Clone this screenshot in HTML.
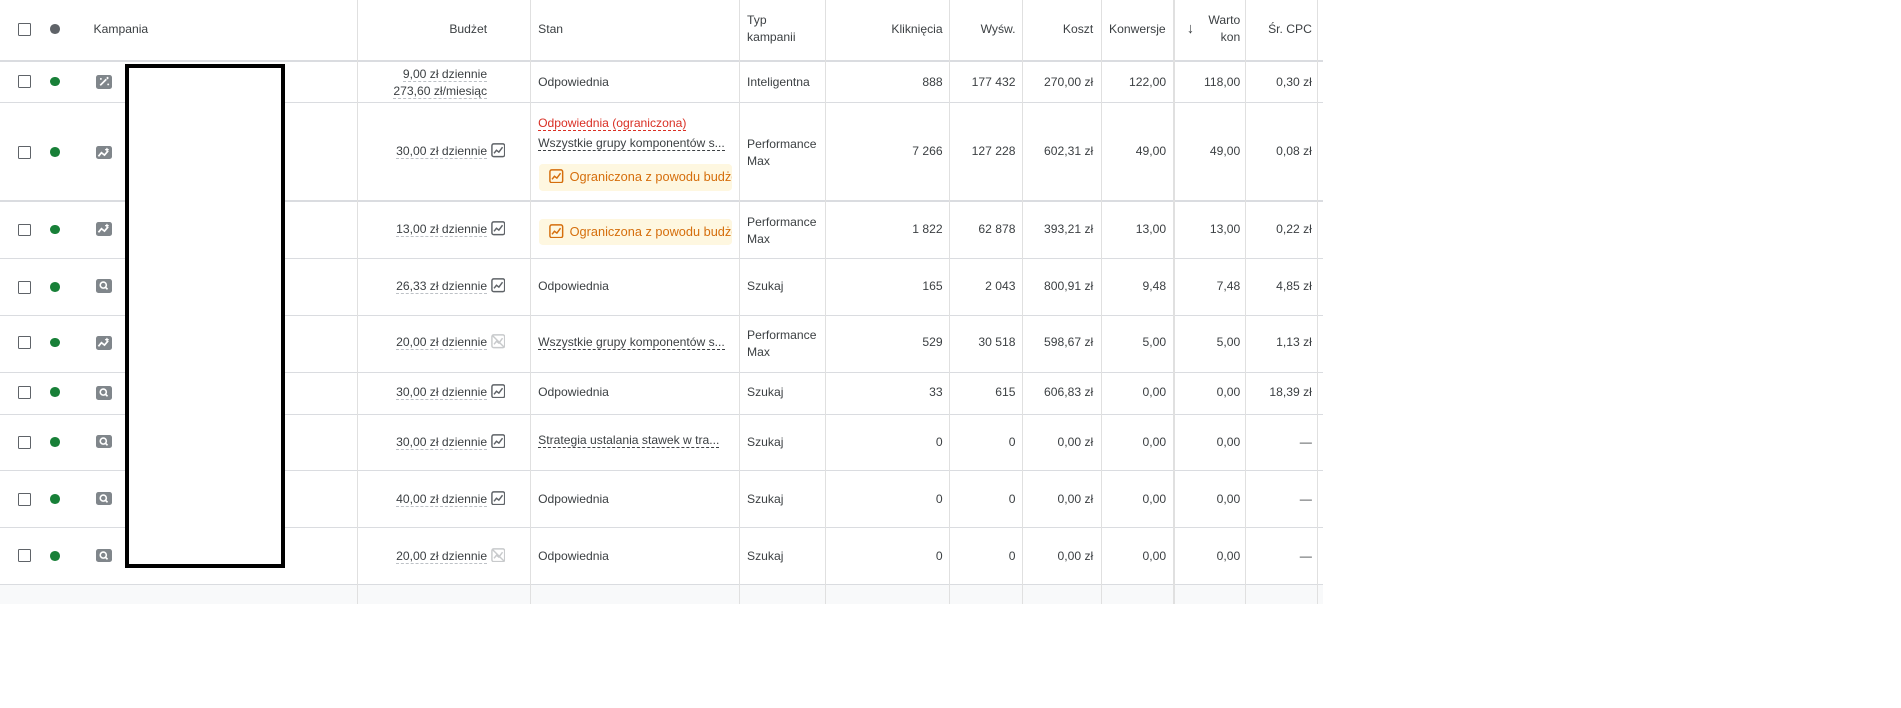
<!DOCTYPE html>
<html><head><meta charset="utf-8">
<style>
html,body{margin:0;padding:0;background:#fff;width:1901px;height:708px;overflow:hidden}
#w{zoom:1.2147;position:relative;width:1565px;height:583px;font-family:"Liberation Sans",Arial,sans-serif;font-size:10px;color:#3c4043}
.hl{position:absolute;left:0;width:1089px;height:1px;background:#dadce0}
.vl{position:absolute;width:1px;background:#e0e0e0;top:0;height:497px}
.t{position:absolute;white-space:nowrap;line-height:14px}
.r{text-align:right}
.cb{position:absolute;left:15px;width:9px;height:9px;border:1px solid #5f6368;border-radius:1px}
.dot{position:absolute;left:41px;width:8px;height:8px;border-radius:50%;background:#188038}
.ic{position:absolute;left:79px;width:13px;height:11px;background:#80868b;border-radius:2px;color:#fff;font-size:8px;line-height:11px;text-align:center;overflow:hidden}
.ic svg{display:block}
.du{border-bottom:1px dashed #bdc1c6}
.dd{border-bottom:1px dashed #3c4043}
svg.ci{width:12px;height:12px;vertical-align:-2px;margin-left:3px}
.chip{position:absolute;left:444px;width:159px;height:22px;background:#fef7e0;border-radius:3px;color:#d56e0c;font-size:10.5px;line-height:22px;overflow:hidden;white-space:nowrap}
.chip svg{vertical-align:-2px;margin:0 5px 0 8px}
</style></head><body><div id="w">
<svg width="0" height="0" style="position:absolute">
<defs>
<symbol id="ch" viewBox="0 0 12 12"><rect x="0.75" y="0.75" width="10.5" height="10.5" rx="1.5" fill="none" stroke="currentColor" stroke-width="1.2"/><polyline points="2.5,8.5 4.5,6 6.5,7.5 9.5,3.5" fill="none" stroke="currentColor" stroke-width="1.2"/></symbol>
<symbol id="chx" viewBox="0 0 12 12"><rect x="0.75" y="0.75" width="10.5" height="10.5" rx="1.5" fill="none" stroke="currentColor" stroke-width="1.2"/><polyline points="2.5,8.5 4.5,6 6.5,7.5 9.5,3.5" fill="none" stroke="currentColor" stroke-width="1.2"/><line x1="1" y1="1" x2="11" y2="11" stroke="currentColor" stroke-width="1.2"/></symbol>
<symbol id="pm" viewBox="0 0 13 11"><polyline points="2,8.5 4.5,5.5 7,7.5 10,4" fill="none" stroke="#fff" stroke-width="1.4"/><path d="M9 1.5v3M7.5 3h3" stroke="#fff" stroke-width="1"/></symbol>
<symbol id="sr" viewBox="0 0 13 11"><circle cx="6" cy="5" r="2.5" fill="none" stroke="#fff" stroke-width="1.3"/><line x1="7.8" y1="6.8" x2="9.5" y2="8.5" stroke="#fff" stroke-width="1.4"/></symbol>
<symbol id="wd" viewBox="0 0 13 11"><line x1="3.5" y1="8.5" x2="8.5" y2="3.5" stroke="#fff" stroke-width="1.4"/><path d="M9.5 1.5v2M8.5 2.5h2M4 2.5v1.5M3.3 3.2h1.5M10 7v1.5M9.3 7.7h1.5" stroke="#fff" stroke-width=".8"/></symbol>
</defs></svg>
<div style="position:absolute;left:0;top:481px;width:1089px;height:16px;background:#f8f9fa"></div>
<div class="hl" style="top:49px;height:2px"></div>
<div class="hl" style="top:84px"></div>
<div class="hl" style="top:165px"></div>
<div class="hl" style="top:212px"></div>
<div class="hl" style="top:259px"></div>
<div class="hl" style="top:306px"></div>
<div class="hl" style="top:341px"></div>
<div class="hl" style="top:387px"></div>
<div class="hl" style="top:434px"></div>
<div class="hl" style="top:481px"></div>
<div class="vl" style="left:294px"></div><div class="vl" style="left:436px"></div><div class="vl" style="left:608px"></div><div class="vl" style="left:679px"></div><div class="vl" style="left:781px"></div><div class="vl" style="left:841px"></div><div class="vl" style="left:906px"></div><div class="vl" style="left:966px"></div><div class="vl" style="left:1025px"></div><div class="vl" style="left:1084px"></div>
<!-- header -->
<div class="cb" style="top:19px"></div>
<div class="dot" style="top:20px;background:#5f6368"></div>
<div class="t" style="left:77px;top:17px">Kampania</div>
<div class="t r" style="right:1164px;top:17px">Budżet</div>
<div class="t" style="left:443px;top:17px">Stan</div>
<div class="t" style="left:615px;top:10px">Typ<br>kampanii</div>
<div class="t r" style="right:789px;top:17px">Kliknięcia</div>
<div class="t r" style="right:729px;top:17px">Wyśw.</div>
<div class="t r" style="right:665px;top:17px">Koszt</div>
<div class="t" style="left:913px;top:17px;width:47px;overflow:hidden">Konwersje</div>
<div class="t" style="left:977px;top:17px;font-size:12px">↓</div>
<div class="t r" style="right:544px;top:10px;width:30px;overflow:hidden">Warto<br>kon</div>
<div class="t r" style="right:485px;top:17px">Śr. CPC</div>
<!-- row 1 -->
<div class="cb" style="top:62px"></div><div class="dot" style="top:63px"></div><div class="ic" style="top:62px"><svg width="13" height="11"><use href="#wd"/></svg></div>
<div class="t r" style="right:1164px;top:54px"><span class="du">9,00 zł dziennie</span><br><span class="du">273,60 zł/miesiąc</span></div>
<div class="t" style="left:443px;top:61px">Odpowiednia</div>
<div class="t" style="left:615px;top:61px">Inteligentna</div>
<div class="t r" style="right:789px;top:61px">888</div><div class="t r" style="right:729px;top:61px">177 432</div><div class="t r" style="right:665px;top:61px">270,00 zł</div><div class="t r" style="right:605px;top:61px">122,00</div><div class="t r" style="right:544px;top:61px">118,00</div><div class="t r" style="right:485px;top:61px">0,30 zł</div>
<!-- row 2 -->
<div class="cb" style="top:120px"></div><div class="dot" style="top:121px"></div><div class="ic" style="top:120px"><svg width="13" height="11"><use href="#pm"/></svg></div>
<div class="t r" style="right:1149px;top:118px"><span class="du">30,00 zł dziennie</span><svg class="ci" style="color:#5f6368"><use href="#ch"/></svg></div>
<div class="t" style="left:443px;top:95px;color:#d93025"><span style="border-bottom:1px dashed #d93025">Odpowiednia (ograniczona)</span></div>
<div class="t" style="left:443px;top:111px"><span class="dd">Wszystkie grupy komponentów s...</span></div>
<div class="chip" style="top:135px"><svg width="12" height="12" style="color:#d56e0c"><use href="#ch"/></svg>Ograniczona z powodu budżetu</div>
<div class="t" style="left:615px;top:112px">Performance<br>Max</div>
<div class="t r" style="right:789px;top:118px">7 266</div><div class="t r" style="right:729px;top:118px">127 228</div><div class="t r" style="right:665px;top:118px">602,31 zł</div><div class="t r" style="right:605px;top:118px">49,00</div><div class="t r" style="right:544px;top:118px">49,00</div><div class="t r" style="right:485px;top:118px">0,08 zł</div>
<!-- row 3 -->
<div class="cb" style="top:184px"></div><div class="dot" style="top:185px"></div><div class="ic" style="top:183px"><svg width="13" height="11"><use href="#pm"/></svg></div>
<div class="t r" style="right:1149px;top:182px"><span class="du">13,00 zł dziennie</span><svg class="ci" style="color:#5f6368"><use href="#ch"/></svg></div>
<div class="chip" style="top:180px"><svg width="12" height="12" style="color:#d56e0c"><use href="#ch"/></svg>Ograniczona z powodu budżetu</div>
<div class="t" style="left:615px;top:176px">Performance<br>Max</div>
<div class="t r" style="right:789px;top:182px">1 822</div><div class="t r" style="right:729px;top:182px">62 878</div><div class="t r" style="right:665px;top:182px">393,21 zł</div><div class="t r" style="right:605px;top:182px">13,00</div><div class="t r" style="right:544px;top:182px">13,00</div><div class="t r" style="right:485px;top:182px">0,22 zł</div>
<!-- row 4 -->
<div class="cb" style="top:231px"></div><div class="dot" style="top:232px"></div><div class="ic" style="top:230px"><svg width="13" height="11"><use href="#sr"/></svg></div>
<div class="t r" style="right:1149px;top:229px"><span class="du">26,33 zł dziennie</span><svg class="ci" style="color:#5f6368"><use href="#ch"/></svg></div>
<div class="t" style="left:443px;top:229px">Odpowiednia</div>
<div class="t" style="left:615px;top:229px">Szukaj</div>
<div class="t r" style="right:789px;top:229px">165</div><div class="t r" style="right:729px;top:229px">2 043</div><div class="t r" style="right:665px;top:229px">800,91 zł</div><div class="t r" style="right:605px;top:229px">9,48</div><div class="t r" style="right:544px;top:229px">7,48</div><div class="t r" style="right:485px;top:229px">4,85 zł</div>
<!-- row 5 -->
<div class="cb" style="top:277px"></div><div class="dot" style="top:278px"></div><div class="ic" style="top:277px"><svg width="13" height="11"><use href="#pm"/></svg></div>
<div class="t r" style="right:1149px;top:275px"><span class="du">20,00 zł dziennie</span><svg class="ci" style="color:#c8cacc"><use href="#chx"/></svg></div>
<div class="t" style="left:443px;top:275px"><span class="dd">Wszystkie grupy komponentów s...</span></div>
<div class="t" style="left:615px;top:269px">Performance<br>Max</div>
<div class="t r" style="right:789px;top:275px">529</div><div class="t r" style="right:729px;top:275px">30 518</div><div class="t r" style="right:665px;top:275px">598,67 zł</div><div class="t r" style="right:605px;top:275px">5,00</div><div class="t r" style="right:544px;top:275px">5,00</div><div class="t r" style="right:485px;top:275px">1,13 zł</div>
<!-- row 6 -->
<div class="cb" style="top:318px"></div><div class="dot" style="top:319px"></div><div class="ic" style="top:318px"><svg width="13" height="11"><use href="#sr"/></svg></div>
<div class="t r" style="right:1149px;top:316px"><span class="du">30,00 zł dziennie</span><svg class="ci" style="color:#5f6368"><use href="#ch"/></svg></div>
<div class="t" style="left:443px;top:316px">Odpowiednia</div>
<div class="t" style="left:615px;top:316px">Szukaj</div>
<div class="t r" style="right:789px;top:316px">33</div><div class="t r" style="right:729px;top:316px">615</div><div class="t r" style="right:665px;top:316px">606,83 zł</div><div class="t r" style="right:605px;top:316px">0,00</div><div class="t r" style="right:544px;top:316px">0,00</div><div class="t r" style="right:485px;top:316px">18,39 zł</div>
<!-- row 7 -->
<div class="cb" style="top:359px"></div><div class="dot" style="top:360px"></div><div class="ic" style="top:358px"><svg width="13" height="11"><use href="#sr"/></svg></div>
<div class="t r" style="right:1149px;top:357px"><span class="du">30,00 zł dziennie</span><svg class="ci" style="color:#5f6368"><use href="#ch"/></svg></div>
<div class="t" style="left:443px;top:356px"><span class="dd">Strategia ustalania stawek w tra...</span></div>
<div class="t" style="left:615px;top:357px">Szukaj</div>
<div class="t r" style="right:789px;top:357px">0</div><div class="t r" style="right:729px;top:357px">0</div><div class="t r" style="right:665px;top:357px">0,00 zł</div><div class="t r" style="right:605px;top:357px">0,00</div><div class="t r" style="right:544px;top:357px">0,00</div><div class="t r" style="right:485px;top:357px">—</div>
<!-- row 8 -->
<div class="cb" style="top:406px"></div><div class="dot" style="top:407px"></div><div class="ic" style="top:405px"><svg width="13" height="11"><use href="#sr"/></svg></div>
<div class="t r" style="right:1149px;top:404px"><span class="du">40,00 zł dziennie</span><svg class="ci" style="color:#5f6368"><use href="#ch"/></svg></div>
<div class="t" style="left:443px;top:404px">Odpowiednia</div>
<div class="t" style="left:615px;top:404px">Szukaj</div>
<div class="t r" style="right:789px;top:404px">0</div><div class="t r" style="right:729px;top:404px">0</div><div class="t r" style="right:665px;top:404px">0,00 zł</div><div class="t r" style="right:605px;top:404px">0,00</div><div class="t r" style="right:544px;top:404px">0,00</div><div class="t r" style="right:485px;top:404px">—</div>
<!-- row 9 -->
<div class="cb" style="top:452px"></div><div class="dot" style="top:454px"></div><div class="ic" style="top:452px"><svg width="13" height="11"><use href="#sr"/></svg></div>
<div class="t r" style="right:1149px;top:451px"><span class="du">20,00 zł dziennie</span><svg class="ci" style="color:#c8cacc"><use href="#chx"/></svg></div>
<div class="t" style="left:443px;top:451px">Odpowiednia</div>
<div class="t" style="left:615px;top:451px">Szukaj</div>
<div class="t r" style="right:789px;top:451px">0</div><div class="t r" style="right:729px;top:451px">0</div><div class="t r" style="right:665px;top:451px">0,00 zł</div><div class="t r" style="right:605px;top:451px">0,00</div><div class="t r" style="right:544px;top:451px">0,00</div><div class="t r" style="right:485px;top:451px">—</div>
<div style="position:absolute;left:103px;top:53px;width:125px;height:408px;border:4px solid #000;background:#fff"></div>
</div></body></html>
